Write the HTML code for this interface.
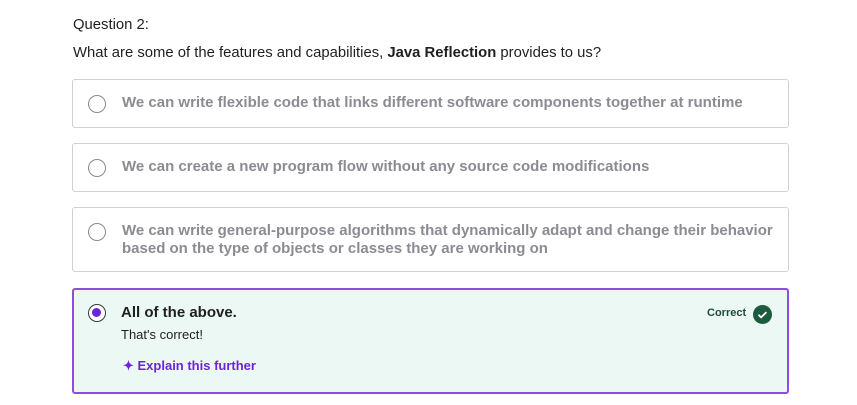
<!DOCTYPE html>
<html><head><style>
body{margin:0;background:#fff;font-family:"Liberation Sans",sans-serif;width:857px;height:405px;overflow:hidden;position:relative;color:#1f1f1f}
.t{position:absolute;left:73px;font-size:14.85px}
.box{position:absolute;left:72px;width:717px;border:1px solid #d1d0d6;border-radius:3px;box-sizing:border-box}
.r{position:absolute;left:15px;width:18px;height:18px;border:1.5px solid #8a8a8f;border-radius:50%;box-sizing:border-box}
.o{position:absolute;left:49px;font-size:15px;font-weight:bold;color:#8c8b93;line-height:18px}
</style></head><body>
<div class="t" style="top:17px">Question 2:</div>
<div class="t" style="top:45px">What are some of the features and capabilities, <b>Java Reflection</b> provides to us?</div>
<div class="box" style="top:79px;height:49px"><div class="r" style="top:15px"></div><div class="o" style="top:14px">We can write flexible code that links different software components together at runtime</div></div>
<div class="box" style="top:143px;height:49px"><div class="r" style="top:15px"></div><div class="o" style="top:14px">We can create a new program flow without any source code modifications</div></div>
<div class="box" style="top:207px;height:65px"><div class="r" style="top:15px"></div><div class="o" style="top:14px">We can write general-purpose algorithms that dynamically adapt and change their behavior<br>based on the type of objects or classes they are working on</div></div>
<div class="box" style="top:288px;height:106px;border:2px solid #8a4fe0;background:#ebf8f4">
<div class="r" style="top:14px;left:14px;border:1.5px solid #3a3a3a;background:#fff"><div style="position:absolute;left:3px;top:3px;width:9px;height:9px;border-radius:50%;background:#6a26d6"></div></div>
<div class="o" style="top:14px;left:47px;color:#1f1f1f">All of the above.</div>
<div style="position:absolute;left:47px;top:37px;font-size:13px;color:#1f1f1f">That's correct!</div>
<div style="position:absolute;left:49px;top:68px;font-size:13px;font-weight:bold;color:#6a26d6">✦ Explain this further</div>
<div style="position:absolute;left:633px;top:17px;font-size:11px;font-weight:bold;color:#1d4d39">Correct</div>
<div style="position:absolute;left:679px;top:15px;width:19px;height:19px;border-radius:50%;background:#1d5b3f"><svg width="19" height="19"><path d="M5.5 9.8l2.6 2.6 5.3-5.3" fill="none" stroke="#fff" stroke-width="1.8"/></svg></div>
</div>
</body></html>
